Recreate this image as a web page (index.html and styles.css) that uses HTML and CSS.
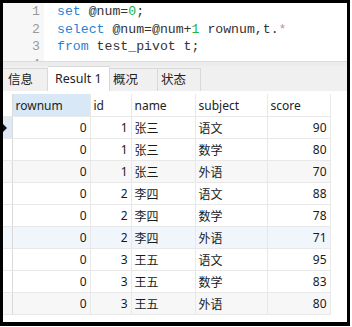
FILE: index.html
```html
<!DOCTYPE html>
<html lang="zh-CN">

<head>
    <meta charset="UTF-8">
    <title>Query Result</title>
    <link rel="stylesheet" href="styles.css">
</head>

<body>
    <div class="frame">
        <div class="editor">
            <div class="gutter">
                <div>1</div>
                <div>2</div>
                <div>3</div>
                <div>4</div>
            </div>
            <div class="code">
                <div class="line"><span class="kw">set</span> @num=<span class="num">0</span>;</div>
                <div class="line"><span class="kw">select</span> @num=@num+<span class="num">1</span> rownum,t.<span class="star">*</span></div>
                <div class="line"><span class="kw">from</span> test_pivot t;</div>
            </div>
        </div>

        <div class="splitter"></div>

        <div class="tabs">
            <div class="tab">信息</div>
            <div class="tab active">Result 1</div>
            <div class="tab">概况</div>
            <div class="tab">状态</div>
        </div>

        <div class="grid-wrap">
            <table class="grid">
                <colgroup>
                    <col class="c-ind">
                    <col class="c-rownum">
                    <col class="c-id">
                    <col class="c-name">
                    <col class="c-subject">
                    <col class="c-score">
                </colgroup>
                <thead>
                    <tr>
                        <th class="ind"></th>
                        <th class="sorted">rownum</th>
                        <th>id</th>
                        <th>name</th>
                        <th>subject</th>
                        <th>score</th>
                    </tr>
                </thead>
                <tbody id="rows"></tbody>
            </table>
        </div>
    </div>

    <script>
        const data = [
            [0, 1, '张三', '语文', 90],
            [0, 1, '张三', '数学', 80],
            [0, 1, '张三', '外语', 70],
            [0, 2, '李四', '语文', 88],
            [0, 2, '李四', '数学', 78],
            [0, 2, '李四', '外语', 71],
            [0, 3, '王五', '语文', 95],
            [0, 3, '王五', '数学', 83],
            [0, 3, '王五', '外语', 80]
        ];

        const tbody = document.getElementById('rows');
        data.forEach((row, i) => {
            const tr = document.createElement('tr');
            if (i === 2 || i === 8) tr.className = 'stripe';
            if (i === 5) tr.className = 'hover';
            tr.innerHTML =
                `<td class="ind">${i === 0 ? '<span class="caret"></span>' : ''}</td>` +
                `<td class="r">${row[0]}</td>` +
                `<td class="r">${row[1]}</td>` +
                `<td>${row[2]}</td>` +
                `<td>${row[3]}</td>` +
                `<td class="r">${row[4]}</td>`;
            if (i === 0) tr.querySelector('.ind').classList.add('current');
            tbody.appendChild(tr);
        });
    </script>
</body>

</html>
```

FILE: styles.css
```css
body {
    margin: 0;
    background-color: white;
    font-family: "Noto Sans", "Noto Sans CJK SC", sans-serif;
    color: #1a1a1a;
}

.frame {
    width: 344px;
    height: 319px;
    border: 3px solid #000;
    border-bottom-width: 4px;
    background-color: white;
    overflow: hidden;
    display: flex;
    flex-direction: column;
}

/* SQL editor */
.editor {
    display: flex;
    height: 58px;
    overflow: hidden;
    font-family: "Liberation Mono", monospace;
    font-size: 13.2px;
    line-height: 17.5px;
}

.gutter {
    width: 37px;
    padding-right: 4px;
    background-color: #f7f7f7;
    color: #9a9a9a;
    text-align: right;
}

.code {
    padding-left: 13px;
    color: #333;
}

.line {
    white-space: pre;
}

.kw {
    color: #2d7fd3;
}

.num {
    color: #23b04a;
}

.star {
    color: #c08aa8;
}

.splitter {
    height: 4px;
    background-color: #ececec;
    border-top: 1px solid #dcdcdc;
}

/* result tabs */
.tabs {
    display: flex;
    align-items: flex-end;
    height: 25px;
    background-color: #f0f0f0;
    font-size: 12.5px;
}

.tab {
    height: 22px;
    line-height: 22px;
    padding: 0 5px;
    border-right: 1px solid #d9d9d9;
    border-top: 1px solid #d9d9d9;
    color: #222;
}

.tab:first-child {
    width: 34px;
}

.tab:nth-child(3) {
    width: 40px;
    padding: 0 4px 0 3px;
}

.tab:nth-child(4) {
    width: 35px;
    padding: 0 4px 0 3px;
}

.tab.active {
    width: 49px;
    height: 24px;
    line-height: 24px;
    padding: 0 5px 0 7px;
    background-color: white;
}

/* result grid */
.grid-wrap {
    padding-top: 3px;
    background-color: white;
}

.grid {
    border-collapse: collapse;
    table-layout: fixed;
    width: 327px;
    font-size: 12px;
}

.c-ind { width: 9px; }
.c-rownum { width: 78px; }
.c-id { width: 41px; }
.c-name { width: 64px; }
.c-subject { width: 72px; }
.c-score { width: 63px; }

.grid th,
.grid td {
    border-right: 1px solid #e8e8e8;
    border-bottom: 1px solid #e8e8e8;
    padding: 0 3px;
    white-space: nowrap;
    overflow: hidden;
}

.grid th {
    height: 22px;
    font-weight: normal;
    text-align: left;
    color: #222;
}

.grid th.sorted {
    background-color: #d9e8f6;
}

.grid td {
    height: 21px;
}

.grid td.r {
    text-align: right;
}

.grid .ind {
    padding: 0;
    position: relative;
    border-right-color: #dadada;
}

.grid td.current {
    background-color: #dde9f5;
}

.caret {
    position: absolute;
    left: 0;
    top: 7px;
    width: 0;
    height: 0;
    border-top: 4px solid transparent;
    border-bottom: 4px solid transparent;
    border-left: 4px solid #111;
}

.grid tr.stripe td {
    background-color: #f7f7f7;
}

.grid tr.hover td {
    background-color: #f1f6fc;
}
```
